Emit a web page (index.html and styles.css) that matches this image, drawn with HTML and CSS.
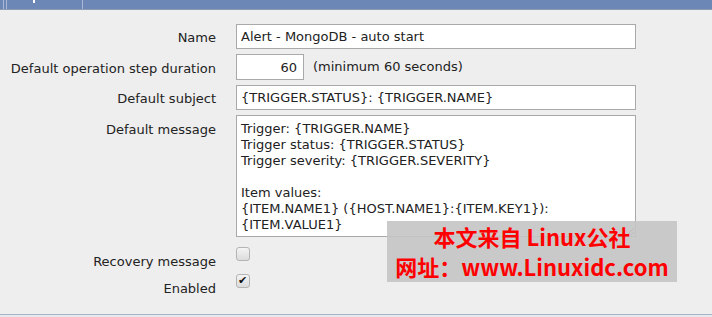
FILE: index.html
```html
<!DOCTYPE html>
<html lang="en">
<head>
	<meta charset="UTF-8">
	<title>Action</title>
	<link rel="stylesheet" href="styles.css">
</head>
<body>
	<!-- 顶部标签栏 -->
	<div class="tabs">
		<div class="tab"><span class="tab-mark"></span></div>
	</div>

	<!-- 表单 -->
	<div class="form">
		<label class="lbl" for="name">Name</label>
		<div class="field"><input id="name" class="txt wide" type="text" value="Alert - MongoDB - auto start"></div>

		<label class="lbl" for="step">Default operation step duration</label>
		<div class="field"><input id="step" class="txt num" type="text" value="60"><span class="hint">(minimum 60 seconds)</span></div>

		<label class="lbl" for="subject">Default subject</label>
		<div class="field"><input id="subject" class="txt wide" type="text" value="{TRIGGER.STATUS}: {TRIGGER.NAME}"></div>

		<label class="lbl top" for="message">Default message</label>
		<div class="field"><textarea id="message" class="area">Trigger: {TRIGGER.NAME}
Trigger status: {TRIGGER.STATUS}
Trigger severity: {TRIGGER.SEVERITY}

Item values:
{ITEM.NAME1} ({HOST.NAME1}:{ITEM.KEY1}):
{ITEM.VALUE1}</textarea></div>

		<label class="lbl chk-lbl" for="recovery">Recovery message</label>
		<div class="field chk-field"><input id="recovery" class="chk" type="checkbox"></div>

		<label class="lbl chk-lbl" for="enabled">Enabled</label>
		<div class="field chk-field"><input id="enabled" class="chk" type="checkbox" checked></div>
	</div>

	<div class="foot"></div>

	<!-- 水印 -->
	<div class="mark">
		<p>本文来自 Linux公社</p>
		<p>网址：www.Linuxidc.com</p>
	</div>
</body>
</html>
```

FILE: styles.css
```css
*{
	margin:0;padding: 0;
	box-sizing: border-box;
}
body{
	width: 712px;
	height: 317px;
	background: #eeeeee;
	font: 13px/16px "DejaVu Sans", Verdana, sans-serif;
	color: #222222;
	position: relative;
	overflow: hidden;
}
.tabs{
	height: 10px;
	background: #6c86b5;
	border-bottom: 1px solid #8e9cb3;
	padding-left: 3px;
}
.tab{
	width: 80px;
	height: 9px;
	border-left: 1px solid #a9b8d6;
	border-right: 1px solid #a9b8d6;
	position: relative;
}
.tab:before{
	content: "";
	position: absolute;
	left: 2px;
	top: 0;
	width: 1px;
	height: 9px;
	background: #a9b8d6;
}
.tab-mark{
	position: absolute;
	left: 29px;
	top: 0;
	width: 2px;
	height: 3px;
	background: #ffffff;
}
.form{
	display: grid;
	grid-template-columns: 216px 1fr;
	column-gap: 20px;
	row-gap: 5px;
	padding-top: 14px;
}
.lbl{
	text-align: right;
	align-self: center;
	white-space: nowrap;
	padding-top: 3px;
}
.lbl.top{
	align-self: start;
	padding-top: 7px;
}
.field{
	display: flex;
	align-items: center;
}
.txt{
	height: 25px;
	border: 1px solid #a9a9a9;
	background: #ffffff;
	font: 13px "DejaVu Sans", Verdana, sans-serif;
	color: #222222;
	padding: 0 4px;
	outline: none;
}
.wide{
	width: 400px;
}
.num{
	width: 68px;
	height: 26px;
	text-align: right;
	padding-right: 6px;
}
.hint{
	margin-left: 9px;
}
.area{
	width: 400px;
	height: 122px;
	border: 1px solid #a9a9a9;
	background: #ffffff;
	font: 13px/16px "DejaVu Sans", Verdana, sans-serif;
	color: #222222;
	padding: 5px 4px;
	resize: both;
	overflow: hidden;
	outline: none;
}
.chk-lbl{
	align-self: start;
	height: 22px;
	padding-top: 12px;
}
.chk-field{
	height: 22px;
	align-items: flex-start;
	padding-top: 5px;
}
.chk{
	-webkit-appearance: none;
	appearance: none;
	width: 14px;
	height: 14px;
	border: 1px solid #b4b4b4;
	border-radius: 3px;
	background: linear-gradient(#f4f4f4, #dcdcdc);
	position: relative;
}
.chk:checked:after{
	content: "\2714";
	position: absolute;
	left: 1px;
	top: -2px;
	font: bold 11px/16px "DejaVu Sans", sans-serif;
	color: #111111;
}
.foot{
	position: absolute;
	left: 0;
	right: 0;
	bottom: 0;
	height: 3px;
	border-top: 1px solid #a7b3c6;
	background: #e6e9ee;
}
.mark{
	position: absolute;
	left: 387px;
	top: 221px;
	width: 290px;
	height: 61px;
	background: rgba(196,196,196,0.9);
	color: #ff0000;
	font: bold 22px/30px "Noto Sans CJK SC", "DejaVu Sans", sans-serif;
	text-align: center;
	white-space: nowrap;
}
```
